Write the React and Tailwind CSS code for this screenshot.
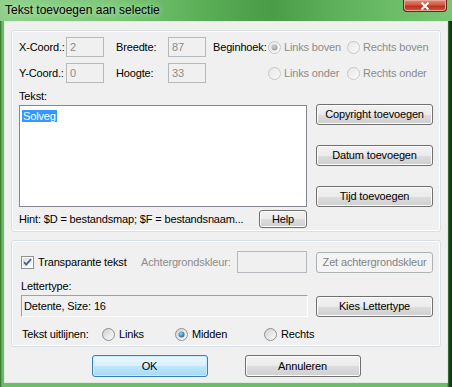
import React from 'react';

const font = "font-['Liberation_Sans',Arial,sans-serif]";

const btnBg =
    'bg-[linear-gradient(#f2f2f2_0%,#ebebeb_50%,#dddddd_51%,#cfcfcf_100%)]';

const Button = ({ children, className = '', primary = false, disabled = false }) => {
    if (disabled) {
        return (
            <div
                className={`flex items-center justify-center rounded-[3px] border border-[#adb2b5] bg-[#f4f4f4] text-[#838383] ${className}`}
            >
                {children}
            </div>
        );
    }
    if (primary) {
        return (
            <div
                className={`flex items-center justify-center rounded-[3px] border border-[#3c7fb1] bg-[linear-gradient(#eaf6fd_0%,#d9f0fc_50%,#bee6fd_51%,#a7d9f5_100%)] shadow-[inset_0_0_0_1px_#c7ecfc] text-black ${className}`}
            >
                {children}
            </div>
        );
    }
    return (
        <div
            className={`flex items-center justify-center rounded-[3px] border border-[#707070] ${btnBg} shadow-[inset_0_0_0_1px_#fcfcfc] text-black ${className}`}
        >
            {children}
        </div>
    );
};

const Radio = ({ checked = false, disabled = false }) => {
    const id = `r${checked ? 'c' : 'u'}${disabled ? 'd' : 'e'}`;
    return (
        <svg width="13" height="13" viewBox="0 0 13 13" className="shrink-0">
            <defs>
                <linearGradient id={id} x1="0" y1="0" x2="1" y2="1">
                    <stop offset="0" stopColor={disabled ? '#e6e6e6' : '#cfcfcf'} />
                    <stop offset="1" stopColor={disabled ? '#fbfbfb' : '#ffffff'} />
                </linearGradient>
                <radialGradient id={`${id}dot`} cx="0.4" cy="0.35" r="0.7">
                    <stop offset="0" stopColor={disabled ? '#d0d0d0' : '#8fd6f5'} />
                    <stop offset="1" stopColor={disabled ? '#9a9a9a' : '#1c5e8a'} />
                </radialGradient>
            </defs>
            <circle
                cx="6.5"
                cy="6.5"
                r="6"
                fill={`url(#${id})`}
                stroke={disabled ? '#c6c6c6' : '#8e8f8f'}
            />
            {checked && <circle cx="6.5" cy="6.5" r="3" fill={`url(#${id}dot)`} />}
        </svg>
    );
};

const Checkbox = () => (
    <svg width="13" height="13" viewBox="0 0 13 13" className="shrink-0">
        <defs>
            <linearGradient id="cbg" x1="0" y1="0" x2="1" y2="1">
                <stop offset="0" stopColor="#dcdcdc" />
                <stop offset="1" stopColor="#ffffff" />
            </linearGradient>
        </defs>
        <rect x="0.5" y="0.5" width="12" height="12" fill="#fff" stroke="#8e8f8f" />
        <rect x="2" y="2" width="9" height="9" fill="url(#cbg)" />
        <path d="M3 6.2 L5.2 8.6 L10 3.2" fill="none" stroke="#4a5f97" strokeWidth="1.8" />
    </svg>
);

const DisabledInput = ({ value }) => (
    <div className="flex h-[20px] w-[38px] shrink-0 items-center border border-[#b5b9bd] bg-[#f0f0f0] pl-[3px] text-[#8c8c8c]">
        {value}
    </div>
);

export default function App() {
    return (
        <div
            className={`${font} relative flex h-[387px] w-[452px] flex-col overflow-hidden whitespace-nowrap bg-[linear-gradient(90deg,#2f6b2d_0px,#69b965_2px,#6cbd68_4px,#6cbd68_calc(100%-5px),#1d4a1c_calc(100%-3px),#0f2e0f_100%)] text-[11px] tracking-[-0.15px] text-black`}
        >
            {/* Title bar */}
            <div className="flex h-[21px] items-start justify-between bg-[linear-gradient(90deg,#8fd08b_0%,#7cc778_25%,#5aae56_45%,#4a9c46_60%,#5fb25b_75%,#7ac675_100%)]">
                <span className="pl-[5px] pt-[2px] text-[12px] leading-[16px] tracking-normal text-black [text-shadow:0_0_6px_#d8f0d6]">
                    Tekst toevoegen aan selectie
                </span>
                <div className="mr-[5px] flex h-[12px] w-[44px] items-center justify-center rounded-b-[4px] border border-t-0 border-[#6b2219] bg-[linear-gradient(#e08a7a_0%,#cf5a45_45%,#b8321d_55%,#d2533c_100%)] shadow-[inset_0_0_0_1px_#e9a597]">
                    <svg width="10" height="8" viewBox="0 0 10 8">
                        <path d="M1.5 0.5 L8.5 7.5 M8.5 0.5 L1.5 7.5" stroke="#ffffff" strokeWidth="2" />
                    </svg>
                </div>
            </div>

            {/* Client area */}
            <div className="mx-[4px] flex h-[362px] flex-col items-center bg-[#f0f0f0] shadow-[inset_0_0_0_1px_#dfe9df]">
                {/* Group 1 */}
                <div className="mt-[9px] flex h-[202px] w-[430px] flex-col rounded-[3px] border border-[#d5dfe5] pl-[7px] pt-[6px] shadow-[inset_0_0_0_1px_#ffffff]">
                    <div className="flex h-[20px] items-center">
                        <span className="w-[47px] shrink-0">X-Coord.:</span>
                        <DisabledInput value="2" />
                        <span className="ml-[12px] w-[52px] shrink-0">Breedte:</span>
                        <DisabledInput value="87" />
                        <span className="ml-[7px] w-[55px] shrink-0">Beginhoek:</span>
                        <Radio checked disabled />
                        <span className="ml-[3px] w-[63px] shrink-0 text-[#8c8c8c]">Links boven</span>
                        <Radio disabled />
                        <span className="ml-[3px] text-[#8c8c8c]">Rechts boven</span>
                    </div>
                    <div className="mt-[6px] flex h-[20px] items-center">
                        <span className="w-[47px] shrink-0">Y-Coord.:</span>
                        <DisabledInput value="0" />
                        <span className="ml-[12px] w-[52px] shrink-0">Hoogte:</span>
                        <DisabledInput value="33" />
                        <span className="ml-[62px]" />
                        <Radio disabled />
                        <span className="ml-[3px] w-[63px] shrink-0 text-[#8c8c8c]">Links onder</span>
                        <Radio disabled />
                        <span className="ml-[3px] text-[#8c8c8c]">Rechts onder</span>
                    </div>

                    <div className="mt-[7px] flex gap-[9px]">
                        <div className="flex w-[288px] flex-col">
                            <span className="h-[13px] leading-[13px]">Tekst:</span>
                            <div className="mt-[2px] h-[102px] border border-[#828790] bg-white pl-[2px] pt-[2px]">
                                <span className="bg-[#3399ff] px-[1px] leading-[13px] text-white">Solveg</span>
                            </div>
                            <div className="mt-[3px] flex h-[18px] items-center justify-between">
                                <span>Hint: $D = bestandsmap; $F = bestandsnaam...</span>
                                <Button className="h-[18px] w-[48px]">Help</Button>
                            </div>
                        </div>
                        <div className="flex w-[117px] flex-col gap-[20px] pt-[14px]">
                            <Button className="h-[21px]">Copyright toevoegen</Button>
                            <Button className="h-[21px]">Datum toevoegen</Button>
                            <Button className="h-[21px]">Tijd toevoegen</Button>
                        </div>
                    </div>
                </div>

                {/* Group 2 */}
                <div className="mt-[8px] flex h-[107px] w-[430px] flex-col rounded-[3px] border border-[#d5dfe5] pl-[9px] pt-[10px] shadow-[inset_0_0_0_1px_#ffffff]">
                    <div className="flex h-[22px] items-center">
                        <div className="flex w-[120px] shrink-0 items-center gap-[4px]">
                            <Checkbox />
                            <span>Transparante tekst</span>
                        </div>
                        <span className="w-[96px] shrink-0 text-[#8c8c8c]">Achtergrondskleur:</span>
                        <div className="h-[22px] w-[70px] shrink-0 border border-[#b5b9bd] bg-[#f0f0f0]" />
                        <Button disabled className="ml-[9px] h-[21px] w-[117px]">
                            Zet achtergrondskleur
                        </Button>
                    </div>
                    <div className="mt-[7px] flex items-end gap-[8px]">
                        <div className="flex w-[287px] flex-col">
                            <span className="h-[13px] leading-[13px]">Lettertype:</span>
                            <div className="mt-[2px] flex h-[22px] items-center border border-b-white border-l-[#a0a0a0] border-r-white border-t-[#a0a0a0] bg-[#f0f0f0] pl-[2px]">
                                Detente, Size: 16
                            </div>
                        </div>
                        <Button className="h-[21px] w-[117px]">Kies Lettertype</Button>
                    </div>
                    <div className="mt-[8px] flex h-[18px] items-center">
                        <span className="w-[81px] shrink-0 pl-[1px]">Tekst uitlijnen:</span>
                        <div className="flex w-[73px] items-center gap-[4px]">
                            <Radio />
                            <span>Links</span>
                        </div>
                        <div className="flex w-[89px] items-center gap-[4px]">
                            <Radio checked />
                            <span>Midden</span>
                        </div>
                        <div className="flex items-center gap-[4px]">
                            <Radio />
                            <span>Rechts</span>
                        </div>
                    </div>
                </div>

                {/* Dialog buttons */}
                <div className="mt-[8px] flex gap-[37px]">
                    <Button primary className="h-[22px] w-[116px]">
                        OK
                    </Button>
                    <Button className="h-[22px] w-[116px]">Annuleren</Button>
                </div>
            </div>
        </div>
    );
}
